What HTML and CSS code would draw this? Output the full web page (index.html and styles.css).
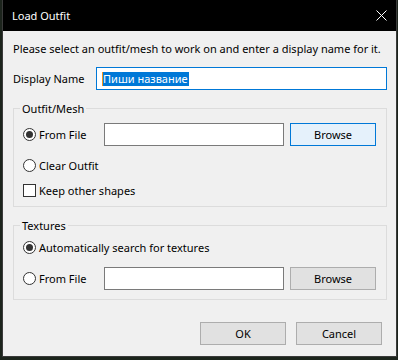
FILE: index.html
```html
<!DOCTYPE html>
<html lang="en">
<head>
    <meta charset="UTF-8">
    <title>Load Outfit</title>
    <link rel="stylesheet" href="styles.css">
</head>
<body>
    <div class="window">
        <div class="titlebar">
            <span class="title">Load Outfit</span>
            <svg class="close" width="11" height="11" viewBox="0 0 11 11">
                <path d="M0.5 0.5 L10.5 10.5 M10.5 0.5 L0.5 10.5" stroke="#fff" stroke-width="1" fill="none"/>
            </svg>
        </div>
        <div class="content">
            <p class="intro">Please select an outfit/mesh to work on and enter a display name for it.</p>

            <div class="name-row">
                <label class="name-label">Display Name</label>
                <div class="textbox name-box focused"><span class="selection">Пиши название</span></div>
            </div>

            <fieldset class="group">
                <legend>Outfit/Mesh</legend>
                <div class="file-row">
                    <label class="option file-option"><span class="radio checked"></span>From File</label>
                    <div class="textbox file-box"></div>
                    <button class="btn focused">Browse</button>
                </div>
                <div class="row gap-lg">
                    <label class="option"><span class="radio"></span>Clear Outfit</label>
                </div>
                <div class="row gap-sm">
                    <label class="option"><span class="check"></span>Keep other shapes</label>
                </div>
            </fieldset>

            <fieldset class="group textures">
                <legend>Textures</legend>
                <div class="row">
                    <label class="option"><span class="radio checked"></span>Automatically search for textures</label>
                </div>
                <div class="file-row gap-lg">
                    <label class="option file-option"><span class="radio"></span>From File</label>
                    <div class="textbox file-box"></div>
                    <button class="btn">Browse</button>
                </div>
            </fieldset>

            <div class="actions">
                <button class="btn">OK</button>
                <button class="btn">Cancel</button>
            </div>
        </div>
    </div>
</body>
</html>
```

FILE: styles.css
```css
body {
    margin: 0;
    background-color: #1c241c;
    font-family: 'Noto Sans', sans-serif;
    font-size: 11px;
    color: #000;
}
.window {
    margin-left: 2px;
    width: 395px;
    height: 357px;
    box-sizing: border-box;
    background-color: #f0f0f0;
    border: 1px solid #3a3a3a;
    border-top: none;
}
.titlebar {
    height: 31px;
    background-color: #000;
    color: #fff;
    display: flex;
    align-items: center;
    justify-content: space-between;
    padding: 0 9px 0 9px;
}
.title {
    line-height: 16px;
}
.close {
    display: block;
}
.content {
    padding: 10px 9px 0 10px;
}
.intro {
    margin: 0;
    line-height: 16px;
}
.name-row {
    margin-top: 10px;
    display: flex;
    align-items: center;
}
.name-label {
    width: 83px;
}
.textbox {
    height: 23px;
    box-sizing: border-box;
    background-color: #fff;
    border: 1px solid #7a7a7a;
}
.textbox.focused {
    border-color: #0078d7;
}
.name-box {
    flex: 1;
    padding: 3px 0 0 5px;
}
.selection {
    display: inline-block;
    line-height: 14px;
    background-color: #0078d7;
    color: #fff;
    border-left: 1px solid #f7941d;
    padding-right: 1px;
}
.group {
    margin: 11px 0 0 0;
    padding: 7px 9px 7px 9px;
    border: 1px solid #dcdcdc;
    min-width: 0;
}
.group legend {
    padding: 0 2px;
    margin-left: -3px;
    line-height: 15px;
}
.textures {
    padding-top: 6px;
    padding-bottom: 9px;
}
.row {
    height: 17px;
    display: flex;
    align-items: center;
}
.gap-lg {
    margin-top: 11px;
}
.gap-sm {
    margin-top: 8px;
}
.file-row {
    height: 23px;
    display: flex;
    align-items: center;
}
.option {
    display: flex;
    align-items: center;
    gap: 3px;
    white-space: nowrap;
}
.file-option {
    width: 81px;
}
.file-box {
    width: 180px;
}
.radio {
    width: 13px;
    height: 13px;
    box-sizing: border-box;
    border: 1px solid #333;
    border-radius: 50%;
    background-color: #fff;
    display: flex;
    align-items: center;
    justify-content: center;
}
.radio.checked::after {
    content: "";
    width: 7px;
    height: 7px;
    border-radius: 50%;
    background-color: #333;
}
.check {
    width: 13px;
    height: 13px;
    box-sizing: border-box;
    border: 1px solid #333;
    background-color: #fff;
}
.btn {
    width: 86px;
    height: 23px;
    margin: 0;
    padding: 0;
    font-family: inherit;
    font-size: 11px;
    color: #000;
    background-color: #e1e1e1;
    border: 1px solid #adadad;
}
.file-row .btn {
    margin-left: 6px;
}
.btn.focused {
    background-color: #e5f1fb;
    border-color: #0078d7;
}
.actions {
    margin-top: 22px;
    margin-right: 5px;
    display: flex;
    justify-content: flex-end;
    gap: 10px;
}
```
